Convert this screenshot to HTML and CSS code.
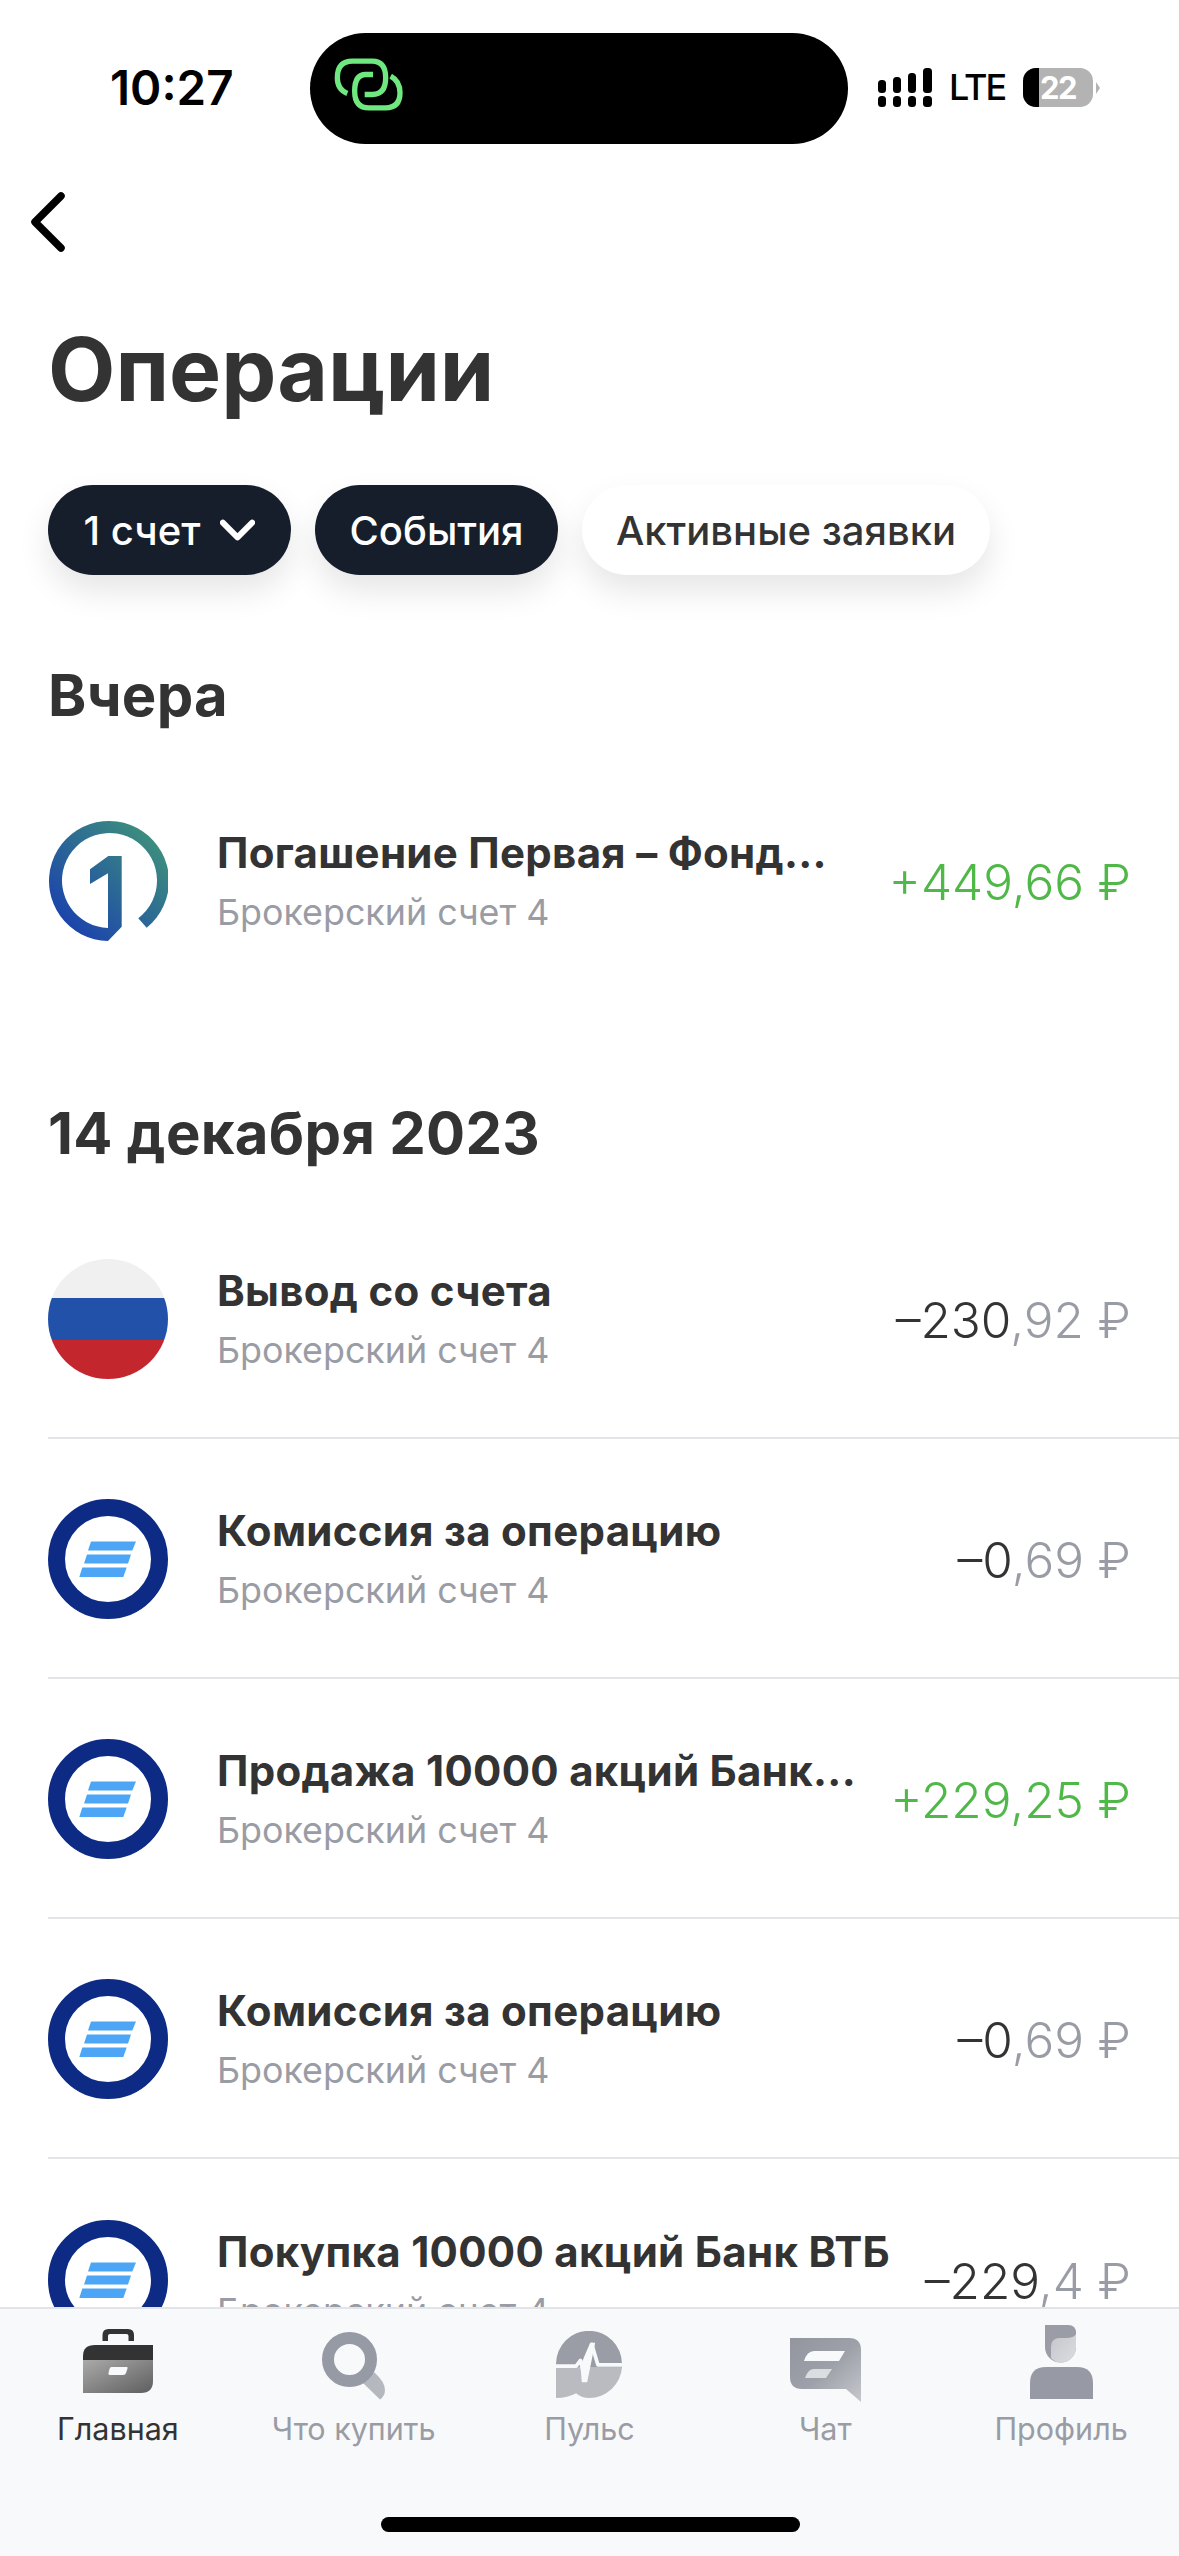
FILE: index.html
```html
<!DOCTYPE html>
<html lang="ru">
<head>
<meta charset="utf-8">
<title>Операции</title>
<link rel="stylesheet" href="styles.css">
</head>
<body>
<svg class="defs" width="0" height="0" aria-hidden="true">
  <defs>
    <symbol id="tb" viewBox="0 0 120 120">
      <circle cx="60" cy="60" r="51.5" fill="#fff" stroke="#0d2b85" stroke-width="17"/>
      <path fill="#4da6f5" d="M43 42.5H88L84.300 51.500H40ZM39 55.500H83L80 64.500H36ZM34.300 68.500H78.700L75.300 78H31.300Z"/>
    </symbol>
    <linearGradient id="one" x1="0" y1="1" x2="1" y2="0">
      <stop offset="0" stop-color="#1535b5"/>
      <stop offset="1" stop-color="#439c75"/>
    </linearGradient>
    <linearGradient id="case" x1="0" y1="0" x2="1" y2="1">
      <stop offset="0" stop-color="#aaa"/>
      <stop offset="1" stop-color="#5e5e5e"/>
    </linearGradient>
    <linearGradient id="chat" x1="0" y1="0" x2="1" y2="1">
      <stop offset="0" stop-color="#93969f"/>
      <stop offset=".5" stop-color="#9da0a8"/>
      <stop offset="1" stop-color="#c6c8cd"/>
    </linearGradient>
    <linearGradient id="face" x1="0" y1="0" x2="1" y2="1">
      <stop offset="0" stop-color="#c4c6cb"/>
      <stop offset="1" stop-color="#dcdde0"/>
    </linearGradient>
  </defs>
</svg>

<div class="page">
  <main class="content">
    <header class="status">
      <span class="time">10:27</span>
      <div class="island">
        <svg class="link" viewBox="70 60 210 170" width="70" height="57">
          <path d="M110 172Q80 160 80 125Q80 75 125 75H185Q225 75 225 125Q225 175 185 175H162M187 115H165Q132 115 132 165Q132 215 175 215H225Q268 215 268 170Q268 135 240 120" fill="none" stroke="#70e880" stroke-width="16"/>
        </svg>
      </div>
      <div class="status-right">
        <svg class="signal" viewBox="0 0 54 39" width="54" height="39">
          <g fill="#000">
            <rect x="0" y="28" width="8" height="11" rx="3.500"/><rect x="15" y="28" width="8" height="11" rx="3.500"/><rect x="30" y="28" width="8" height="11" rx="3.500"/><rect x="45" y="28" width="9" height="11" rx="3.500"/>
            <rect x="0" y="12" width="8" height="13" rx="3.500"/><rect x="15" y="9" width="8" height="16" rx="3.500"/><rect x="30" y="5" width="8" height="20" rx="3.500"/><rect x="45" y="0" width="9" height="25" rx="3.500"/>
          </g>
        </svg>
        <span class="lte">LTE</span>
        <div class="battery"><span class="battery-fill"></span><span class="battery-num">22</span></div>
        <span class="battery-cap"></span>
      </div>
    </header>

    <svg class="back" viewBox="0 0 36 60" width="36" height="60">
      <path d="M32 4L6 30L32 56" fill="none" stroke="#000" stroke-width="7.500" stroke-linecap="round" stroke-linejoin="round"/>
    </svg>

    <h1 class="title">Операции</h1>

    <div class="chips">
      <div class="chip chip-dark chip-first">1 счет
        <svg viewBox="0 0 38 24" width="35" height="22"><path d="M3 4L19 20L35 4" fill="none" stroke="#fff" stroke-width="6.500" stroke-linecap="round" stroke-linejoin="round"/></svg>
      </div>
      <div class="chip chip-dark">События</div>
      <div class="chip chip-light">Активные заявки</div>
    </div>

    <h2 class="day day-first">Вчера</h2>
    <div class="row row-plain">
      <svg class="icon" viewBox="0 0 120 120">
        <path fill="url(#one)" d="M60 120A60 60 0 1 1 98.700 106.700L90.300 97.300A47.500 47.500 0 1 0 60 107V52.300L42 63V48.300L60.300 35H73.700V105.700Z"/>
      </svg>
      <div class="text">
        <div class="name">Погашение Первая – Фонд...</div>
        <div class="sub">Брокерский счет 4</div>
      </div>
      <div class="sum sum-plus">+449,66 ₽</div>
    </div>

    <h2 class="day">14 декабря 2023</h2>
    <div class="row">
      <div class="icon flag"></div>
      <div class="text">
        <div class="name">Вывод со счета</div>
        <div class="sub">Брокерский счет 4</div>
      </div>
      <div class="sum">–230<span class="dec">,92 ₽</span></div>
    </div>
    <div class="row">
      <svg class="icon"><use href="#tb"/></svg>
      <div class="text">
        <div class="name">Комиссия за операцию</div>
        <div class="sub">Брокерский счет 4</div>
      </div>
      <div class="sum">–0<span class="dec">,69 ₽</span></div>
    </div>
    <div class="row">
      <svg class="icon"><use href="#tb"/></svg>
      <div class="text">
        <div class="name">Продажа 10000 акций Банк...</div>
        <div class="sub">Брокерский счет 4</div>
      </div>
      <div class="sum sum-plus">+229,25 ₽</div>
    </div>
    <div class="row">
      <svg class="icon"><use href="#tb"/></svg>
      <div class="text">
        <div class="name">Комиссия за операцию</div>
        <div class="sub">Брокерский счет 4</div>
      </div>
      <div class="sum">–0<span class="dec">,69 ₽</span></div>
    </div>
    <div class="row">
      <svg class="icon"><use href="#tb"/></svg>
      <div class="text">
        <div class="name">Покупка 10000 акций Банк ВТБ</div>
        <div class="sub">Брокерский счет 4</div>
      </div>
      <div class="sum">–229<span class="dec">,4 ₽</span></div>
    </div>
  </main>

  <nav class="tabs">
    <div class="tab tab-active">
      <div class="tab-icon">
        <svg class="ic-case" viewBox="0 0 70 64" width="70" height="64">
          <path fill="#333" fill-rule="evenodd" d="M19.500 12V6Q19.500 0 25.500 0H45Q51 0 51 6V12H45.500V7Q45.500 5 43.500 5H27Q25 5 25 7V12Z"/>
          <path fill="#333" d="M0 31V27Q0 16 12 16H70V31Z"/>
          <path fill="url(#case)" d="M0 31H70V52Q70 64 58 64H0Z"/>
          <path fill="#f8f9fa" d="M28.500 38H44Q45 38 44.500 39.500L43 44Q42.500 46 40 46H27.500Q25 46 25.500 44L26.500 40Q27 38 28.500 38Z"/>
        </svg>
      </div>
      <span>Главная</span>
    </div>
    <div class="tab">
      <div class="tab-icon">
        <svg class="ic-search" viewBox="0 0 64 68" width="64" height="68">
          <path fill="#b5b8be" d="M40 50L52 40Q63 50 63 58Q63 64 58 67.500Z"/>
          <circle cx="27.500" cy="27.500" r="21.500" fill="none" stroke="#969aa4" stroke-width="12"/>
        </svg>
      </div>
      <span>Что купить</span>
    </div>
    <div class="tab">
      <div class="tab-icon">
        <svg class="ic-pulse" viewBox="105 62 197 200" width="66" height="67">
          <path fill="#9a9da6" d="M105 160A98.500 98.500 0 0 1 302 160V172H105Z"/>
          <path fill="#b9bbc1" d="M105 170H302A98.500 98.500 0 0 1 204 262Q180 262 165 248Q140 262 105 262Z"/>
          <path fill="none" stroke="#f8f9fa" stroke-width="11" stroke-linejoin="round" d="M105 167H165L178 150L192 208L212 102L230 163H302"/>
          <path fill="#f8f9fa" d="M207 97H222L198 215H182L178 165Z"/>
        </svg>
      </div>
      <span>Пульс</span>
    </div>
    <div class="tab">
      <div class="tab-icon">
        <svg class="ic-chat" viewBox="0 0 71 64" width="71" height="64">
          <path fill="url(#chat)" d="M0 0H59Q71 0 71 12V64L56 51H12Q0 51 0 39Z"/>
          <path fill="#f8f9fa" d="M24 13H55L49 23H14Q17 13 24 13Z"/>
          <path fill="#dcdde0" d="M24 31H42L36 40H15Q18 31 24 31Z"/>
        </svg>
      </div>
      <span>Чат</span>
    </div>
    <div class="tab">
      <div class="tab-icon">
        <svg class="ic-profile" viewBox="0 0 63 74" width="63" height="74">
          <path fill="#9a9da6" d="M15 0H38Q46 0 46 8V22A15.500 15.500 0 0 1 15 22Z"/>
          <path fill="url(#face)" d="M46 9Q44 13 36 13H30Q21 13 21 22V33Q25 37.500 30.500 37.500A15.500 15.500 0 0 0 46 22Z"/>
          <path fill="#979aa4" d="M0 74V58Q0 42 16 42H47Q63 42 63 58V74Z"/>
        </svg>
      </div>
      <span>Профиль</span>
    </div>
    <div class="home"></div>
  </nav>
</div>
</body>
</html>
```

FILE: styles.css
```css
* { box-sizing: border-box; }

html, body {
  margin: 0;
  padding: 0;
  background: #fff;
}

body {
  font-family: Inter, "Noto Sans", "Liberation Sans", sans-serif;
  color: #333;
}

.defs { position: absolute; }

.page {
  width: 1179px;
  height: 2556px;
  display: flex;
  flex-direction: column;
  overflow: hidden;
}

.content {
  flex: 1;
  min-height: 0;
  overflow: hidden;
}

.status {
  display: flex;
  align-items: center;
  height: 144px;
  padding: 33px 0 0 110px;
}

.time {
  width: 200px;
  padding-bottom: 3px;
  font-size: 47.5px;
  font-weight: 600;
  color: #000;
}

.island {
  width: 538px;
  height: 111px;
  border-radius: 56px;
  background: #000;
  display: flex;
  align-items: center;
  padding: 0 0 8px 24px;
}

.link { display: block; }

.status-right {
  display: flex;
  align-items: center;
  margin-left: 30px;
  padding-bottom: 2px;
}

.signal { display: block; }

.lte {
  margin-left: 17px;
  font-size: 36px;
  letter-spacing: -2px;
  font-weight: 500;
  color: #000;
  line-height: 39px;
  width: 74px;
}

.battery {
  width: 70px;
  height: 39px;
  border-radius: 13px;
  background: #b3b3b3;
  overflow: hidden;
  display: flex;
  align-items: center;
}

.battery-fill {
  width: 16px;
  height: 39px;
  background: #000;
  flex: none;
}

.battery-num {
  margin-left: 1px;
  font-size: 31px;
  letter-spacing: -1.5px;
  font-weight: 700;
  color: #fff;
  line-height: 39px;
}

.battery-cap {
  width: 0;
  height: 0;
  margin-left: 3px;
  border-left: 4px solid #b3b3b3;
  border-top: 6px solid transparent;
  border-bottom: 6px solid transparent;
}

.back {
  display: block;
  margin: 48px 0 0 29px;
}

.title {
  margin: 67px 0 0 48px;
  font-size: 87.5px;
  line-height: 100px;
  font-weight: 700;
  color: #333;
}

.chips {
  display: flex;
  gap: 24px;
  margin: 66px 0 0 48px;
}

.chip {
  height: 90px;
  border-radius: 45px;
  display: flex;
  align-items: center;
  justify-content: center;
  font-size: 40px;
  font-weight: 500;
  box-shadow: 0 16px 32px rgba(0, 0, 0, .1);
}

.chip-dark {
  width: 243px;
  background: #161e2c;
  color: #fff;
}

.chip-first { gap: 20px; }

.chip-light {
  width: 408px;
  background: #fff;
  color: #333;
}

.day {
  margin: 92px 0 26px 48px;
  font-size: 58px;
  letter-spacing: .3px;
  line-height: 80px;
  font-weight: 700;
  color: #333;
}

.day-first { margin-top: 80px; }

.row {
  display: flex;
  align-items: center;
  height: 240px;
  margin-left: 48px;
  padding: 2px 48px 0 0;
  border-bottom: 2px solid #e3e4e7;
}

.row-plain { border-bottom: 0; padding-top: 0; }

.row:last-child { border-bottom: 0; }

.icon {
  width: 120px;
  height: 120px;
  flex: none;
  display: block;
}

.flag {
  border-radius: 50%;
  background: linear-gradient(#f0f0f0 0 39px, #2251a9 39px 81px, #c4262e 81px);
}

.text {
  flex: 1;
  min-width: 0;
  margin-left: 49px;
}

.name {
  font-size: 42px;
  letter-spacing: .3px;
  line-height: 56px;
  font-weight: 700;
  color: #333;
  white-space: nowrap;
}

.sub {
  margin-top: 5px;
  font-size: 35.8px;
  line-height: 52px;
  color: #9a9ca5;
  white-space: nowrap;
}

.sum {
  flex: none;
  padding-top: 2px;
  font-size: 49.5px;
  font-weight: 350;
  color: #333;
  white-space: nowrap;
}

.sum-plus { color: #4fb848; }

.dec { color: #9a9ca5; }

.tabs {
  position: relative;
  flex: none;
  height: 249px;
  background: #f8f9fa;
  border-top: 2px solid #e3e4e7;
  display: grid;
  grid-template-columns: repeat(5, 1fr);
  align-items: start;
}

.tab {
  display: flex;
  flex-direction: column;
  align-items: center;
  font-size: 30.5px;
  line-height: 40px;
  color: #9a9ca5;
}

.tab-active { color: #333; }

.tab-icon {
  height: 100px;
}

.tab-icon svg { display: block; }

.ic-case { margin-top: 20px; }
.ic-search { margin-top: 23px; }
.ic-pulse { margin-top: 22px; }
.ic-chat { margin-top: 29px; }
.ic-profile { margin-top: 16px; }

.home {
  position: absolute;
  left: 381px;
  top: 208px;
  width: 419px;
  height: 15px;
  border-radius: 8px;
  background: #000;
}
```
